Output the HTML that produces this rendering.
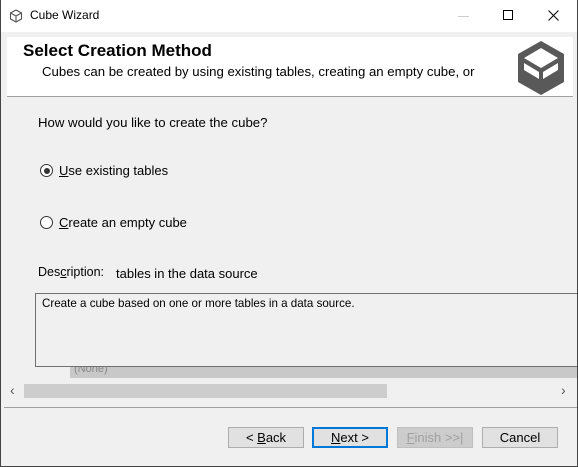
<!DOCTYPE html>
<html><head><style>
*{margin:0;padding:0;box-sizing:border-box}
body{width:578px;height:467px;position:relative;overflow:hidden;background:#f0f0f0;font-family:"Liberation Sans",sans-serif;font-size:12px;color:#000}
.a{position:absolute}
.frame{left:0;top:0;width:578px;height:467px;border:1px solid #444;border-top:none;pointer-events:none}
.btn{position:absolute;top:427px;height:21px;width:76px;background:#e1e1e1;border:1px solid #adadad;text-align:center;line-height:19px;font-size:13px}
u{text-decoration:underline}
</style></head><body>
<div class="a" style="left:0;top:0;width:578px;height:32px;background:#fff"></div>
<svg class="a" style="left:9px;top:9px" width="14" height="14" viewBox="0 0 14 14"><path d="M7 1L12.5 4V10L7 13L1.5 10V4Z M1.5 4L7 7L12.5 4 M7 7V13" fill="none" stroke="#555" stroke-width="1.1"/></svg>
<div class="a" style="left:30px;top:8px;font-size:12px">Cube Wizard</div>
<div class="a" style="left:458px;top:16px;width:11px;height:1px;background:#ccc"></div>
<div class="a" style="left:503px;top:10px;width:10px;height:10px;border:1px solid #000"></div>
<svg class="a" style="left:548px;top:10px" width="11" height="11"><path d="M0.5 0.5L10.5 10.5M10.5 0.5L0.5 10.5" stroke="#000" stroke-width="1"/></svg>
<div class="a" style="left:7px;top:37px;width:566px;height:60px;background:#fff;border-bottom:1px solid #a0a0a0"></div>
<div class="a" style="left:23px;top:41px;font-size:17px;font-weight:bold">Select Creation Method</div>
<div class="a" style="left:42px;top:64px;font-size:13.2px">Cubes can be created by using existing tables, creating an empty cube, or</div>
<svg class="a" style="left:517px;top:41px" width="48" height="55" viewBox="0 0 48 55"><path d="M24 0L47 13V41L24 54L1 41V13Z" fill="#595959"/><path d="M24 7L41 17L24 27L7 17Z" fill="#fff"/><path d="M7 22L22 31V38L7 29Z M41 22L26 31V38L41 29Z" fill="#fff"/></svg>
<div class="a" style="left:38px;top:115px;font-size:13.2px">How would you like to create the cube?</div>
<div class="a" style="left:40px;top:164px;width:13px;height:13px;border:1px solid #333;border-radius:50%;background:#fff"></div>
<div class="a" style="left:43.5px;top:167.5px;width:6px;height:6px;border-radius:50%;background:#333"></div>
<div class="a" style="left:59px;top:163px;font-size:13px"><u>U</u>se existing tables</div>
<div class="a" style="left:40px;top:216px;width:13px;height:13px;border:1px solid #333;border-radius:50%;background:#fff"></div>
<div class="a" style="left:59px;top:215px;font-size:13px"><u>C</u>reate an empty cube</div>
<div class="a" style="left:38px;top:265px;font-size:12.5px">Des<u>c</u>ription:</div>
<div class="a" style="left:116px;top:266px;font-size:13px">tables in the data source</div>
<div class="a" style="left:70px;top:366px;width:508px;height:12px;background:#c8c8c8;color:#888;font-size:11px;line-height:6px;padding-left:4px;overflow:hidden">(None)</div>
<div class="a" style="left:35px;top:293px;width:545px;height:74px;border:1px solid #707070;background:#f0f0f0;padding:3px 6px;font-size:11.6px">Create a cube based on one or more tables in a data source.</div>
<div class="a" style="left:1px;top:383px;width:576px;height:16px;background:#f0f0f0"></div>
<div class="a" style="left:24px;top:384px;width:363px;height:14px;background:#cdcdcd"></div>
<div class="a" style="left:10px;top:382px;color:#555;font-size:14px">&lsaquo;</div>
<div class="a" style="left:561px;top:382px;color:#555;font-size:14px">&rsaquo;</div>
<div class="a" style="left:4px;top:407px;width:574px;height:1px;background:#a0a0a0"></div>
<div class="btn" style="left:228px">&lt; <u>B</u>ack</div>
<div class="btn" style="left:312px;border:2px solid #0078d7;line-height:17px"><u>N</u>ext &gt;</div>
<div class="btn" style="left:397px;color:#a0a0a0;background:#ccc;border-color:#bfbfbf"><u>F</u>inish &gt;&gt;|</div>
<div class="btn" style="left:482px">Cancel</div>
<div class="a frame"></div>
</body></html>
